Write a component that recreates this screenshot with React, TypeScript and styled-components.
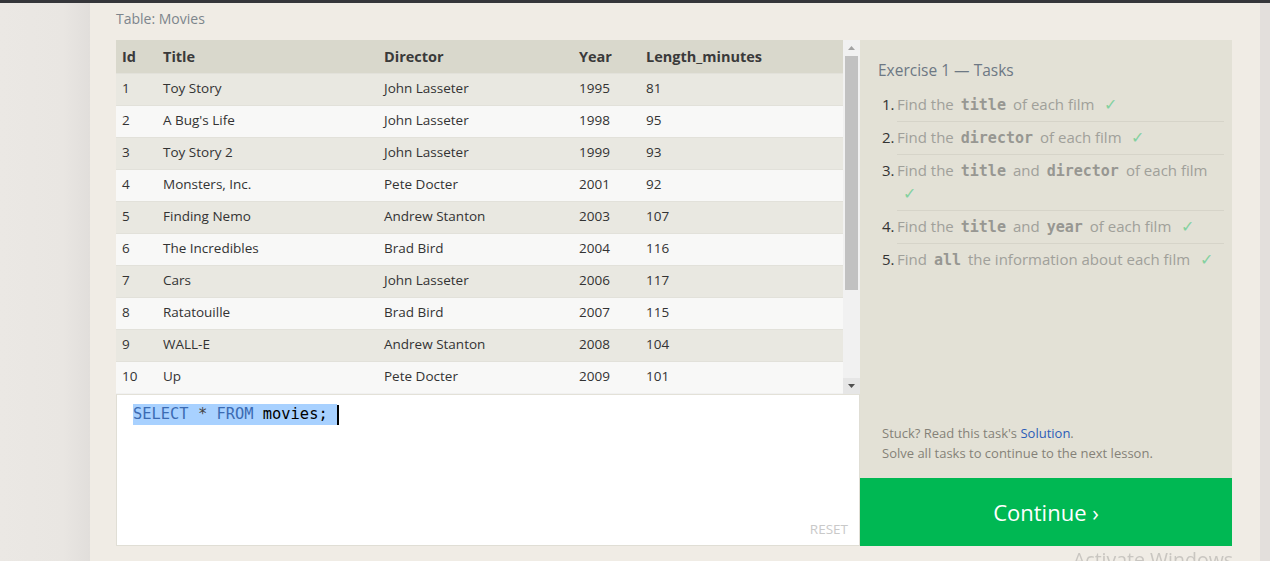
import * as React from 'react';
import styled, { createGlobalStyle } from 'styled-components';

// ------------------------------------
// Data
// ------------------------------------

const movies = [
  [1, 'Toy Story', 'John Lasseter', 1995, 81],
  [2, "A Bug's Life", 'John Lasseter', 1998, 95],
  [3, 'Toy Story 2', 'John Lasseter', 1999, 93],
  [4, 'Monsters, Inc.', 'Pete Docter', 2001, 92],
  [5, 'Finding Nemo', 'Andrew Stanton', 2003, 107],
  [6, 'The Incredibles', 'Brad Bird', 2004, 116],
  [7, 'Cars', 'John Lasseter', 2006, 117],
  [8, 'Ratatouille', 'Brad Bird', 2007, 115],
  [9, 'WALL-E', 'Andrew Stanton', 2008, 104],
  [10, 'Up', 'Pete Docter', 2009, 101],
];

const columns = [
  { label: 'Id', width: 41 },
  { label: 'Title', width: 221 },
  { label: 'Director', width: 195 },
  { label: 'Year', width: 67 },
  { label: 'Length_minutes', width: 203 },
];

type Part = string | { code: string };

const tasks: Part[][] = [
  ['Find the', { code: 'title' }, 'of each film'],
  ['Find the', { code: 'director' }, 'of each film'],
  ['Find the', { code: 'title' }, 'and', { code: 'director' }, 'of each film'],
  ['Find the', { code: 'title' }, 'and', { code: 'year' }, 'of each film'],
  ['Find', { code: 'all' }, 'the information about each film'],
];

// ------------------------------------
// Component
// ------------------------------------

const App = () => (
  <>
    <GlobalStyle />
    <TopBar />
    <Page>
      <Gutter />
      <Main>
        <TableLabel>Table: Movies</TableLabel>
        <Workspace>
          <LeftColumn>
            <TableWrap>
              <TableArea>
                <Table>
                  <colgroup>
                    {columns.map((c) => (
                      <col key={c.label} style={{ width: c.width }} />
                    ))}
                  </colgroup>
                  <thead>
                    <tr>
                      {columns.map((c) => (
                        <Th key={c.label}>{c.label}</Th>
                      ))}
                    </tr>
                  </thead>
                  <tbody>
                    {movies.map((m, i) => (
                      <Row key={i} $odd={i % 2 === 0}>
                        {m.map((v, j) => (
                          <Td key={j}>{v}</Td>
                        ))}
                      </Row>
                    ))}
                  </tbody>
                </Table>
              </TableArea>
              {renderScrollbar()}
            </TableWrap>
            <Editor>
              <CodeLine>
                <Selection>
                  <Kw>SELECT</Kw> <Op>*</Op> <Kw>FROM</Kw> movies;{' '}
                </Selection>
                <Caret />
              </CodeLine>
              <ResetButton>RESET</ResetButton>
            </Editor>
          </LeftColumn>
          <RightColumn>
            <Panel>
              <PanelTitle>Exercise 1 — Tasks</PanelTitle>
              <TaskList>
                {tasks.map((t, i) => renderTask({ parts: t, index: i }))}
              </TaskList>
              <Help>
                <p>
                  Stuck? Read this task's <Link>Solution</Link>.
                </p>
                <p>Solve all tasks to continue to the next lesson.</p>
              </Help>
            </Panel>
            <ContinueButton>Continue ›</ContinueButton>
          </RightColumn>
        </Workspace>
      </Main>
      <RightStrip />
    </Page>
    <Watermark>Activate Windows</Watermark>
  </>
);

export default App;

// ------------------------------------
// renderTask
// ------------------------------------

type RenderTaskProps = {
  parts: Part[];
  index: number;
};
const renderTask = (props: RenderTaskProps) => (
  <Task key={props.index}>
    <TaskNum>{props.index + 1}.</TaskNum>
    <TaskText $last={props.index === tasks.length - 1}>
      {props.parts.map((p, i) =>
        typeof p === 'string' ? (
          <React.Fragment key={i}>{p}</React.Fragment>
        ) : (
          <TaskCode key={i}>{p.code}</TaskCode>
        ),
      )}{' '}
      <Check>✓</Check>
    </TaskText>
  </Task>
);

// ------------------------------------
// renderScrollbar
// ------------------------------------

const renderScrollbar = () => (
  <Scrollbar>
    <ScrollArrow>
      <svg width="7" height="4" viewBox="0 0 7 4">
        <path d="M0 4 L3.5 0 L7 4 Z" fill="#a3a3a3" />
      </svg>
    </ScrollArrow>
    <Track>
      <Thumb />
    </Track>
    <ScrollArrow $active>
      <svg width="7" height="4" viewBox="0 0 7 4">
        <path d="M0 0 L3.5 4 L7 0 Z" fill="#505050" />
      </svg>
    </ScrollArrow>
  </Scrollbar>
);

// ------------------------------------
// Styles
// ------------------------------------

const GlobalStyle = createGlobalStyle`
  body {
    margin: 0;
    background: #ebe8e3;
    font-family: "Open Sans", "Noto Sans", sans-serif;
    color: #333;
    overflow: hidden;
  }
  p { margin: 0; }
`;

const TopBar = styled.div`
  height: 3px;
  background: #35363a;
`;

const Page = styled.div`
  display: flex;
  height: 558px;
`;

const Gutter = styled.div`
  width: 90px;
  background: linear-gradient(to right, #ebe8e4 0%, #e9e6e2 70%, #e1dedb 100%);
`;

const Main = styled.div`
  width: 1170px;
  background: #f0ece5;
  padding-left: 26px;
  box-sizing: border-box;
`;

const RightStrip = styled.div`
  flex: 1;
  background: #e3dfdc;
`;

const TableLabel = styled.div`
  height: 37px;
  padding-top: 6px;
  box-sizing: border-box;
  font-size: 14px;
  color: #7d858c;
`;

const Workspace = styled.div`
  display: flex;
`;

const LeftColumn = styled.div`
  width: 744px;
  display: flex;
  flex-direction: column;
`;

const TableWrap = styled.div`
  display: flex;
  height: 354px;
  background: #f1f1f1;
`;

const TableArea = styled.div`
  flex: 1;
  overflow: hidden;
`;

const Table = styled.table`
  border-collapse: collapse;
  table-layout: fixed;
  width: 727px;
`;

const Th = styled.th`
  height: 33px;
  box-sizing: border-box;
  padding: 0 6px;
  text-align: left;
  font-size: 14.5px;
  font-weight: 700;
  color: #3a3a3a;
  background: #d9d8cc;
`;

const Row = styled.tr<{ $odd: boolean }>`
  background: ${(p) => (p.$odd ? '#e9e8e1' : '#f8f8f7')};
  border-top: 1px solid #e2e1da;
`;

const Td = styled.td`
  height: 32px;
  box-sizing: border-box;
  padding: 0 6px 3px;
  font-size: 13.5px;
  color: #333;
  white-space: nowrap;
`;

const Scrollbar = styled.div`
  width: 17px;
  display: flex;
  flex-direction: column;
  background: #f1f1f1;
`;

const ScrollArrow = styled.div<{ $active?: boolean }>`
  height: 16px;
  display: flex;
  align-items: center;
  justify-content: center;
  background: ${(p) => (p.$active ? '#e6e6e6' : '#f1f1f1')};
`;

const Track = styled.div`
  flex: 1;
  padding: 0 2px;
`;

const Thumb = styled.div`
  height: 234px;
  background: #c1c1c1;
`;

const Editor = styled.div`
  height: 152px;
  background: #fff;
  border: 1px solid #e0ded5;
  border-top: 1px solid #e3e1d8;
  box-sizing: border-box;
  display: flex;
  flex-direction: column;
  justify-content: space-between;
  padding: 9px 11px 8px 16px;
`;

const CodeLine = styled.div`
  display: flex;
  align-items: center;
  font-family: "DejaVu Sans Mono", "Liberation Mono", monospace;
  font-size: 15.4px;
  line-height: 21px;
  color: #000;
`;

const Selection = styled.span`
  background: #a8d1ff;
  white-space: pre;
`;

const Kw = styled.span`
  color: #3b6bb3;
`;

const Op = styled.span`
  color: #444;
`;

const Caret = styled.span`
  width: 2px;
  height: 20px;
  background: #000;
`;

const ResetButton = styled.div`
  align-self: flex-end;
  font-size: 13.5px;
  color: #c9c9c9;
  margin-bottom: -1px;
`;

const RightColumn = styled.div`
  width: 372px;
  display: flex;
  flex-direction: column;
`;

const Panel = styled.div`
  height: 438px;
  background: #e3e1d6;
  padding: 19px 8px 0 18px;
  box-sizing: border-box;
  display: flex;
  flex-direction: column;
`;

const PanelTitle = styled.div`
  font-size: 15.5px;
  color: #6d7884;
  margin-bottom: 8px;
`;

const TaskList = styled.ol`
  list-style: none;
  margin: 0;
  padding: 0 0 0 4px;
  flex: 1;
`;

const Task = styled.li`
  display: flex;
`;

const TaskNum = styled.span`
  width: 15px;
  font-size: 15px;
  line-height: 23px;
  padding-top: 4px;
  color: #333;
`;

const TaskText = styled.span<{ $last: boolean }>`
  flex: 1;
  font-size: 15px;
  line-height: 23px;
  padding: 4px 0 5px;
  color: #a0a09a;
  border-bottom: ${(p) => (p.$last ? 'none' : '1px solid #d6d4c9')};
`;

const TaskCode = styled.code`
  font-family: "DejaVu Sans Mono", "Liberation Mono", monospace;
  font-size: 15px;
  line-height: 1;
  font-weight: 700;
  color: #979792;
  padding: 0 7px;
`;

const Check = styled.span`
  color: #84d1a0;
  font-size: 16px;
  line-height: 1;
  margin-left: 6px;
`;

const Help = styled.div`
  font-size: 13px;
  line-height: 20px;
  color: #858178;
  padding: 0 0 15px 4px;
`;

const Link = styled.a`
  color: #2b5cb8;
  cursor: pointer;
`;

const ContinueButton = styled.button`
  height: 68px;
  border: none;
  background: #00b853;
  color: #fff;
  font-family: "Open Sans", "Noto Sans", sans-serif;
  font-size: 22px;
  cursor: pointer;
`;

const Watermark = styled.div`
  position: fixed;
  left: 1073px;
  top: 546px;
  font-family: "Open Sans", sans-serif;
  font-size: 19.5px;
  color: #c9c6c1;
  white-space: nowrap;
`;
